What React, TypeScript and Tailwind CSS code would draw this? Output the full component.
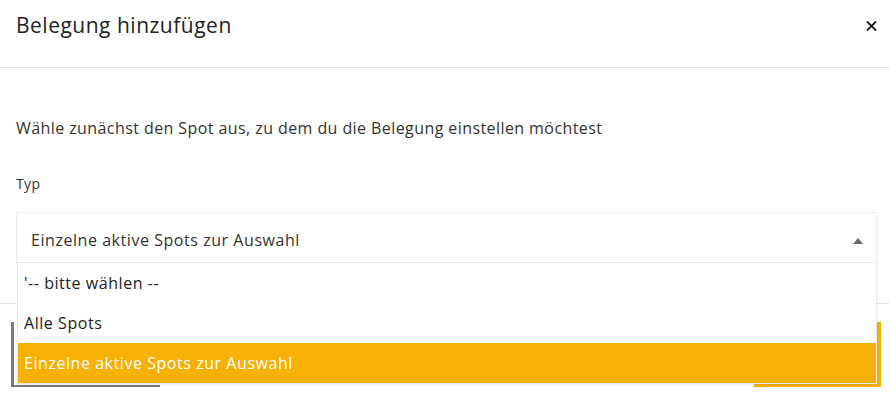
const options = ["'-- bitte wählen --", "Alle Spots", "Einzelne aktive Spots zur Auswahl"];

export default function App() {
  const selected = 2;
  return (
    <div className="relative w-[889px] h-[400px] overflow-hidden bg-white text-[#333]" style={{ fontFamily: "'Open Sans', 'Noto Sans', sans-serif" }}>
      {/* header */}
      <div className="flex items-start justify-between h-[68px] border-b border-[#e3e3e3] pl-4 pr-3">
        <h2 className="pt-[11px] text-[21px] leading-[28px] tracking-[0.5px] text-[#222]">Belegung hinzufügen</h2>
        <button className="mt-[21px] w-[11px] h-[10px]">
          <svg viewBox="0 0 11 10" className="w-[11px] h-[10px]">
            <path d="M1 0.5 L10 9.5 M10 0.5 L1 9.5" stroke="#1a1a1a" strokeWidth="1.8" />
          </svg>
        </button>
      </div>

      {/* body */}
      <div className="px-4 pt-[49px]">
        <p className="text-[16px] leading-[22px] tracking-[0.42px]">Wähle zunächst den Spot aus, zu dem du die Belegung einstellen möchtest</p>
        <label className="block mt-[35px] text-[14px] leading-[20px] tracking-[0.4px]">Typ</label>
        <div className="relative mt-[18px] w-[861px]">
          <div className="flex items-center justify-between h-[51px] border border-[#ebebeb] pl-[14px] pr-[13px] pt-[4px]">
            <span className="text-[16px] tracking-[0.55px]">{options[selected]}</span>
            <svg viewBox="0 0 10 6" className="w-[10px] h-[6px] mt-[2px]">
              <path d="M5 0 L10 6 L0 6 Z" fill="#6b6b6b" />
            </svg>
          </div>
          {/* open listbox */}
          <ul className="absolute left-[1px] right-0 top-[51px] z-10 bg-white border border-t-0 border-[#e8e8e8] shadow-[0_1px_2px_rgba(0,0,0,0.08)]">
            {options.map((o, i) => (
              <li
                key={o}
                className={
                  i === selected
                    ? "h-[40px] flex items-center px-[6px] text-[16px] tracking-[0.55px] bg-[#f7b005] text-white"
                    : "h-[40px] flex items-center px-[6px] text-[16px] tracking-[0.55px] text-[#222]"
                }
              >
                {o}
              </li>
            ))}
          </ul>
        </div>
      </div>

      {/* footer behind the listbox */}
      <div className="absolute left-0 right-0 top-[303px] border-t border-[#e3e3e3] flex justify-between pl-[11px] pr-[8px] pt-[18px]">
        <button className="w-[149px] h-[65px] border-l-[3px] border-b-[2px] border-[#7a7a7a] bg-white" />
        <button className="w-[127px] h-[65px] bg-[#f7b005]" />
      </div>
    </div>
  );
}
